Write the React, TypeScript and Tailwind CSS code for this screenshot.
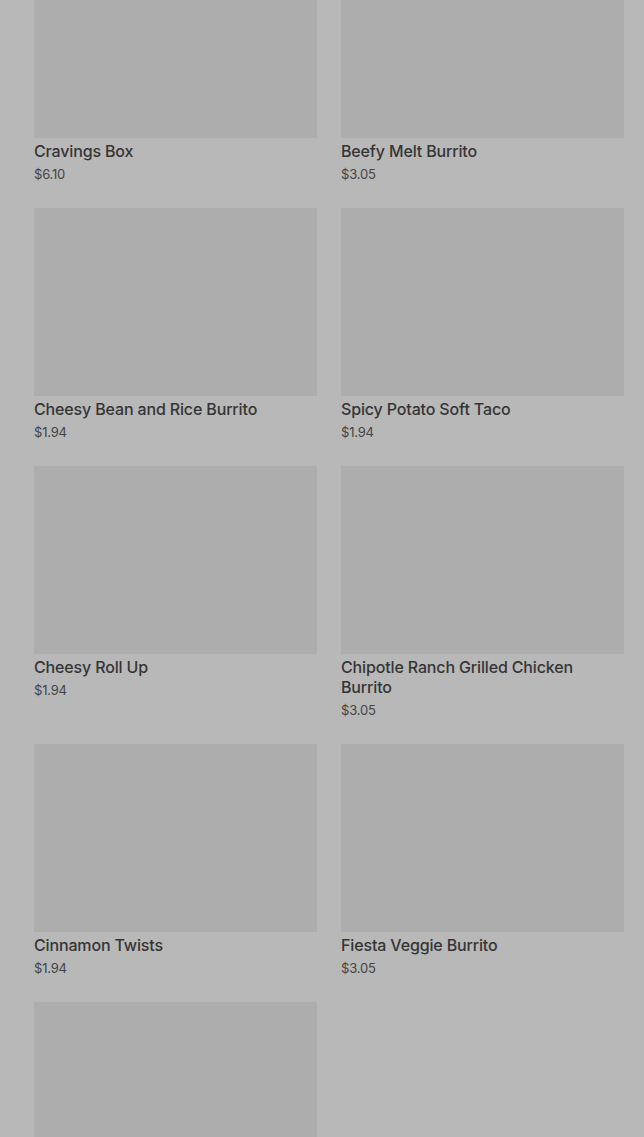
const items = [
  { name: "Cravings Box", price: "$6.10" },
  { name: "Beefy Melt Burrito", price: "$3.05" },
  { name: "Cheesy Bean and Rice Burrito", price: "$1.94" },
  { name: "Spicy Potato Soft Taco", price: "$1.94" },
  { name: "Cheesy Roll Up", price: "$1.94" },
  { name: "Chipotle Ranch Grilled Chicken Burrito", price: "$3.05" },
  { name: "Cinnamon Twists", price: "$1.94" },
  { name: "Fiesta Veggie Burrito", price: "$3.05" },
  { name: "", price: "" },
];

function MenuItem({ name, price }: { name: string; price: string }) {
  return (
    <div className="flex flex-col">
      <div className="h-[188px] w-full bg-[#adadad]" />
      {name && (
        <>
          <div className="mt-[3px] text-[16px] leading-5 font-medium tracking-[-0.15px] text-[#353535]">
            {name}
          </div>
          <div className="mt-[3px] text-[13px] leading-5 tracking-[-0.2px] text-[#444444]">
            {price}
          </div>
        </>
      )}
    </div>
  );
}

export default function App() {
  return (
    <div
      className="h-[1137px] overflow-hidden bg-[#b8b8b8]"
      style={{ fontFamily: "Inter, 'Noto Sans', sans-serif" }}
    >
      <div className="-mt-[50px] pl-[34px] pr-[20px] grid grid-cols-2 gap-x-6 gap-y-6">
        {items.map((item, i) => (
          <MenuItem key={i} name={item.name} price={item.price} />
        ))}
      </div>
    </div>
  );
}
